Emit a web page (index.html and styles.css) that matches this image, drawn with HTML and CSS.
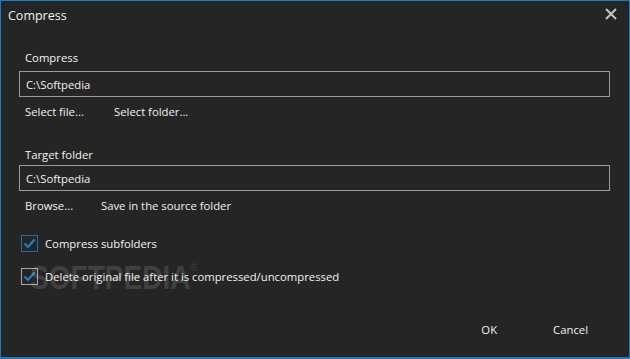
FILE: index.html
```html
<!DOCTYPE html>
<html>
<head>
<meta charset="utf-8">
<link rel="stylesheet" href="styles.css">
</head>
<body>
<div class="window">
  <div class="titlebar">
    <span class="title">Compress</span>
    <svg class="close" width="12" height="12" viewBox="0 0 12 12"><path d="M1 1L11 11M11 1L1 11" stroke="#c4c4c4" stroke-width="2"/></svg>
  </div>
  <div class="content">
    <div class="label first">Compress</div>
    <div class="input">C:\Softpedia</div>
    <div class="links">
      <span class="link w1">Select file...</span>
      <span class="link">Select folder...</span>
    </div>
    <div class="label second">Target folder</div>
    <div class="input">C:\Softpedia</div>
    <div class="links">
      <span class="link w2">Browse...</span>
      <span class="link">Save in the source folder</span>
    </div>
    <div class="checks">
      <label class="check">
        <span class="box blue"><svg width="13" height="11" viewBox="0 0 13 11"><path d="M1.5 5.5L5 9L11.5 1.5" fill="none" stroke="#1e80c4" stroke-width="2.2"/></svg></span>
        <span>Compress subfolders</span>
      </label>
      <label class="check">
        <span class="box gray"><svg width="13" height="11" viewBox="0 0 13 11"><path d="M1.5 5.5L5 9L11.5 1.5" fill="none" stroke="#1e80c4" stroke-width="2.2"/></svg></span>
        <span>Delete original file after it is compressed/uncompressed</span>
      </label>
    </div>
    <div class="buttons">
      <span class="btn">OK</span>
      <span class="btn">Cancel</span>
    </div>
  </div>
  <div class="watermark">SOFTPEDIA<sup>®</sup></div>
</div>
</body>
</html>
```
FILE: styles.css
```css
html, body {
  margin: 0;
  padding: 0;
  background: #252525;
}
.window {
  position: relative;
  width: 630px;
  height: 359px;
  box-sizing: border-box;
  border: 1px solid #1b7cc0;
  border-bottom-width: 2px;
  background: #252525;
  color: #f2f2f2;
  font-family: "Open Sans", "Noto Sans", sans-serif;
  font-size: 11.3px;
  overflow: hidden;
}
.titlebar {
  height: 30px;
  display: flex;
  align-items: center;
  justify-content: space-between;
  padding: 0 12px 0 7px;
}
.title {
  font-size: 12.5px;
  margin-top: -1px;
}
.close {
  margin-top: -4px;
}
.content {
  display: flex;
  flex-direction: column;
  padding: 0 19px 0 18px;
}
.label {
  padding-left: 6px;
  line-height: 16px;
}
.label.first {
  margin-top: 19px;
  margin-bottom: 5px;
}
.label.second {
  margin-top: 27px;
  margin-bottom: 2px;
}
.input {
  height: 26px;
  box-sizing: border-box;
  border: 1px solid #9a9a9a;
  padding-left: 6px;
  display: flex;
  align-items: center;
}
.links {
  display: flex;
  padding-left: 6px;
  margin-top: 7px;
  line-height: 16px;
}
.link.w1 { width: 89px; }
.link.w2 { width: 76px; }
.checks {
  display: flex;
  flex-direction: column;
  gap: 16px;
  margin-top: 21px;
  padding-left: 2px;
}
.check {
  display: flex;
  align-items: center;
  gap: 7px;
  height: 17px;
}
.box {
  width: 17px;
  height: 17px;
  box-sizing: border-box;
  display: flex;
  align-items: center;
  justify-content: center;
}
.box.blue { border: 1px solid #1d6fa6; }
.box.gray { border: 1px solid #a8a8a8; }
.buttons {
  display: flex;
  justify-content: flex-end;
  margin-top: 37px;
  padding-right: 22px;
  gap: 56px;
  line-height: 16px;
}
.watermark {
  position: absolute;
  left: 29px;
  top: 258px;
  font-family: "Liberation Sans", sans-serif;
  font-weight: bold;
  font-size: 33px;
  color: rgba(255, 255, 255, 0.14);
  transform: scaleX(0.85);
  transform-origin: left top;
  pointer-events: none;
  white-space: nowrap;
}
.watermark sup {
  font-size: 11px;
  vertical-align: 18px;
  font-weight: normal;
}
```
